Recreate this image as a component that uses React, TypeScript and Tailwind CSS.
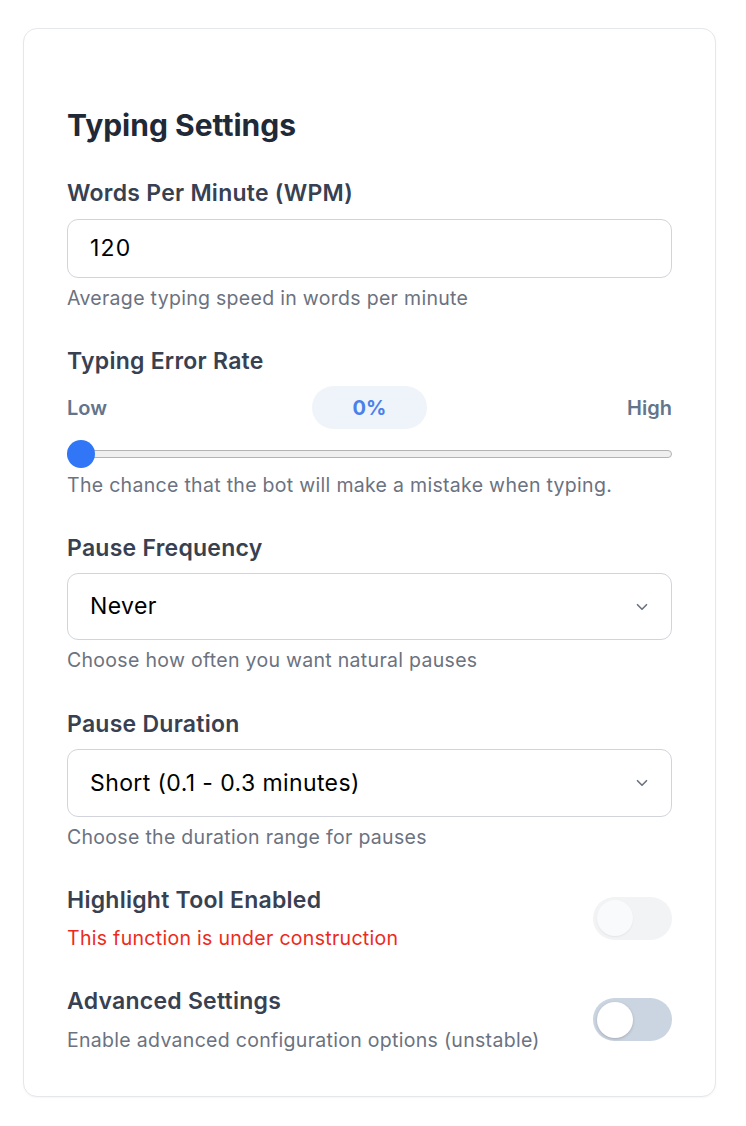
import { ChevronDown } from "lucide-react";

const font = { fontFamily: "Inter, 'Noto Sans', sans-serif" };

function Label({ children }: { children: React.ReactNode }) {
  return (
    <label className="block text-[23px] font-semibold leading-[28px] tracking-[0.25px] text-[#374151]">
      {children}
    </label>
  );
}

function Hint({ children, red }: { children: React.ReactNode; red?: boolean }) {
  return (
    <p
      className={`text-[19.5px] leading-[24px] tracking-[0.3px] ${red ? "text-[#ec2a1c]" : "text-[#6b7280]"}`}
    >
      {children}
    </p>
  );
}

function Select({ value, height }: { value: string; height: string }) {
  return (
    <div
      className={`mt-[11px] flex ${height} items-center justify-between rounded-[11px] border border-[#d1d5db] bg-white pl-[22px] pr-[20px]`}
    >
      <span className="text-[23px] tracking-[0.4px] text-black">{value}</span>
      <ChevronDown className="h-[18px] w-[18px] text-[#6b7280]" strokeWidth={2.2} />
    </div>
  );
}

function Toggle({ disabled }: { disabled?: boolean }) {
  return (
    <div
      className={`flex h-[43px] w-[79px] shrink-0 items-center rounded-full px-[4px] ${
        disabled ? "bg-[#f2f3f5]" : "bg-[#cbd5e1]"
      }`}
    >
      <div
        className={`h-[36px] w-[36px] rounded-full ${
          disabled ? "bg-[#f9fafb] shadow-[0_1px_2px_rgba(0,0,0,0.06)]" : "bg-white shadow-[0_1px_3px_rgba(0,0,0,0.2)]"
        }`}
      />
    </div>
  );
}

export default function App() {
  return (
    <div className="min-h-screen bg-white pl-[23px] pt-[28px]" style={font}>
      <div className="w-[693px] rounded-[14px] border border-[#e5e7eb] bg-white px-[43px] pb-[44px] pt-[78px] shadow-[0_1px_2px_rgba(0,0,0,0.04)]">
        <h2 className="text-[30px] font-bold leading-[36px] text-[#1f2937]">Typing Settings</h2>

        <div className="mt-[36px]">
          <Label>Words Per Minute (WPM)</Label>
          <div className="mt-[12px] flex h-[59px] items-center rounded-[11px] border border-[#d1d5db] bg-white px-[22px]">
            <span className="text-[23px] tracking-[1.2px] text-black">120</span>
          </div>
          <div className="mt-[8px]">
            <Hint>Average typing speed in words per minute</Hint>
          </div>
        </div>

        <div className="mt-[37px]">
          <Label>Typing Error Rate</Label>
          <div className="mt-[11px] grid h-[43px] grid-cols-3 items-center">
            <span className="justify-self-start text-[20px] font-semibold text-[#64748b]">Low</span>
            <span className="flex h-[43px] w-[115px] items-center justify-center justify-self-center rounded-full bg-[#eff4fa] text-[20px] font-bold text-[#4a80ea]">
              0%
            </span>
            <span className="justify-self-end text-[20px] font-semibold text-[#64748b]">High</span>
          </div>
          <div className="relative mt-[11px] flex h-[28px] items-center">
            <div className="h-[8px] w-full rounded-full border border-[#b3b3b3] bg-[#efefef]" />
            <div className="absolute left-0 top-0 h-[28px] w-[28px] rounded-full bg-[#3076f6]" />
          </div>
          <div className="mt-[5px]">
            <Hint>The chance that the bot will make a mistake when typing.</Hint>
          </div>
        </div>

        <div className="mt-[37px]">
          <Label>Pause Frequency</Label>
          <Select value="Never" height="h-[67px]" />
          <div className="mt-[8px]">
            <Hint>Choose how often you want natural pauses</Hint>
          </div>
        </div>

        <div className="mt-[38px]">
          <Label>Pause Duration</Label>
          <Select value="Short (0.1 - 0.3 minutes)" height="h-[68px]" />
          <div className="mt-[8px]">
            <Hint>Choose the duration range for pauses</Hint>
          </div>
        </div>

        <div className="mt-[37px] flex items-center justify-between">
          <div>
            <Label>Highlight Tool Enabled</Label>
            <div className="mt-[12px]">
              <Hint red>This function is under construction</Hint>
            </div>
          </div>
          <Toggle disabled />
        </div>

        <div className="mt-[37px] flex items-center justify-between">
          <div>
            <Label>Advanced Settings</Label>
            <div className="mt-[13px]">
              <Hint>Enable advanced configuration options (unstable)</Hint>
            </div>
          </div>
          <Toggle />
        </div>
      </div>
    </div>
  );
}
